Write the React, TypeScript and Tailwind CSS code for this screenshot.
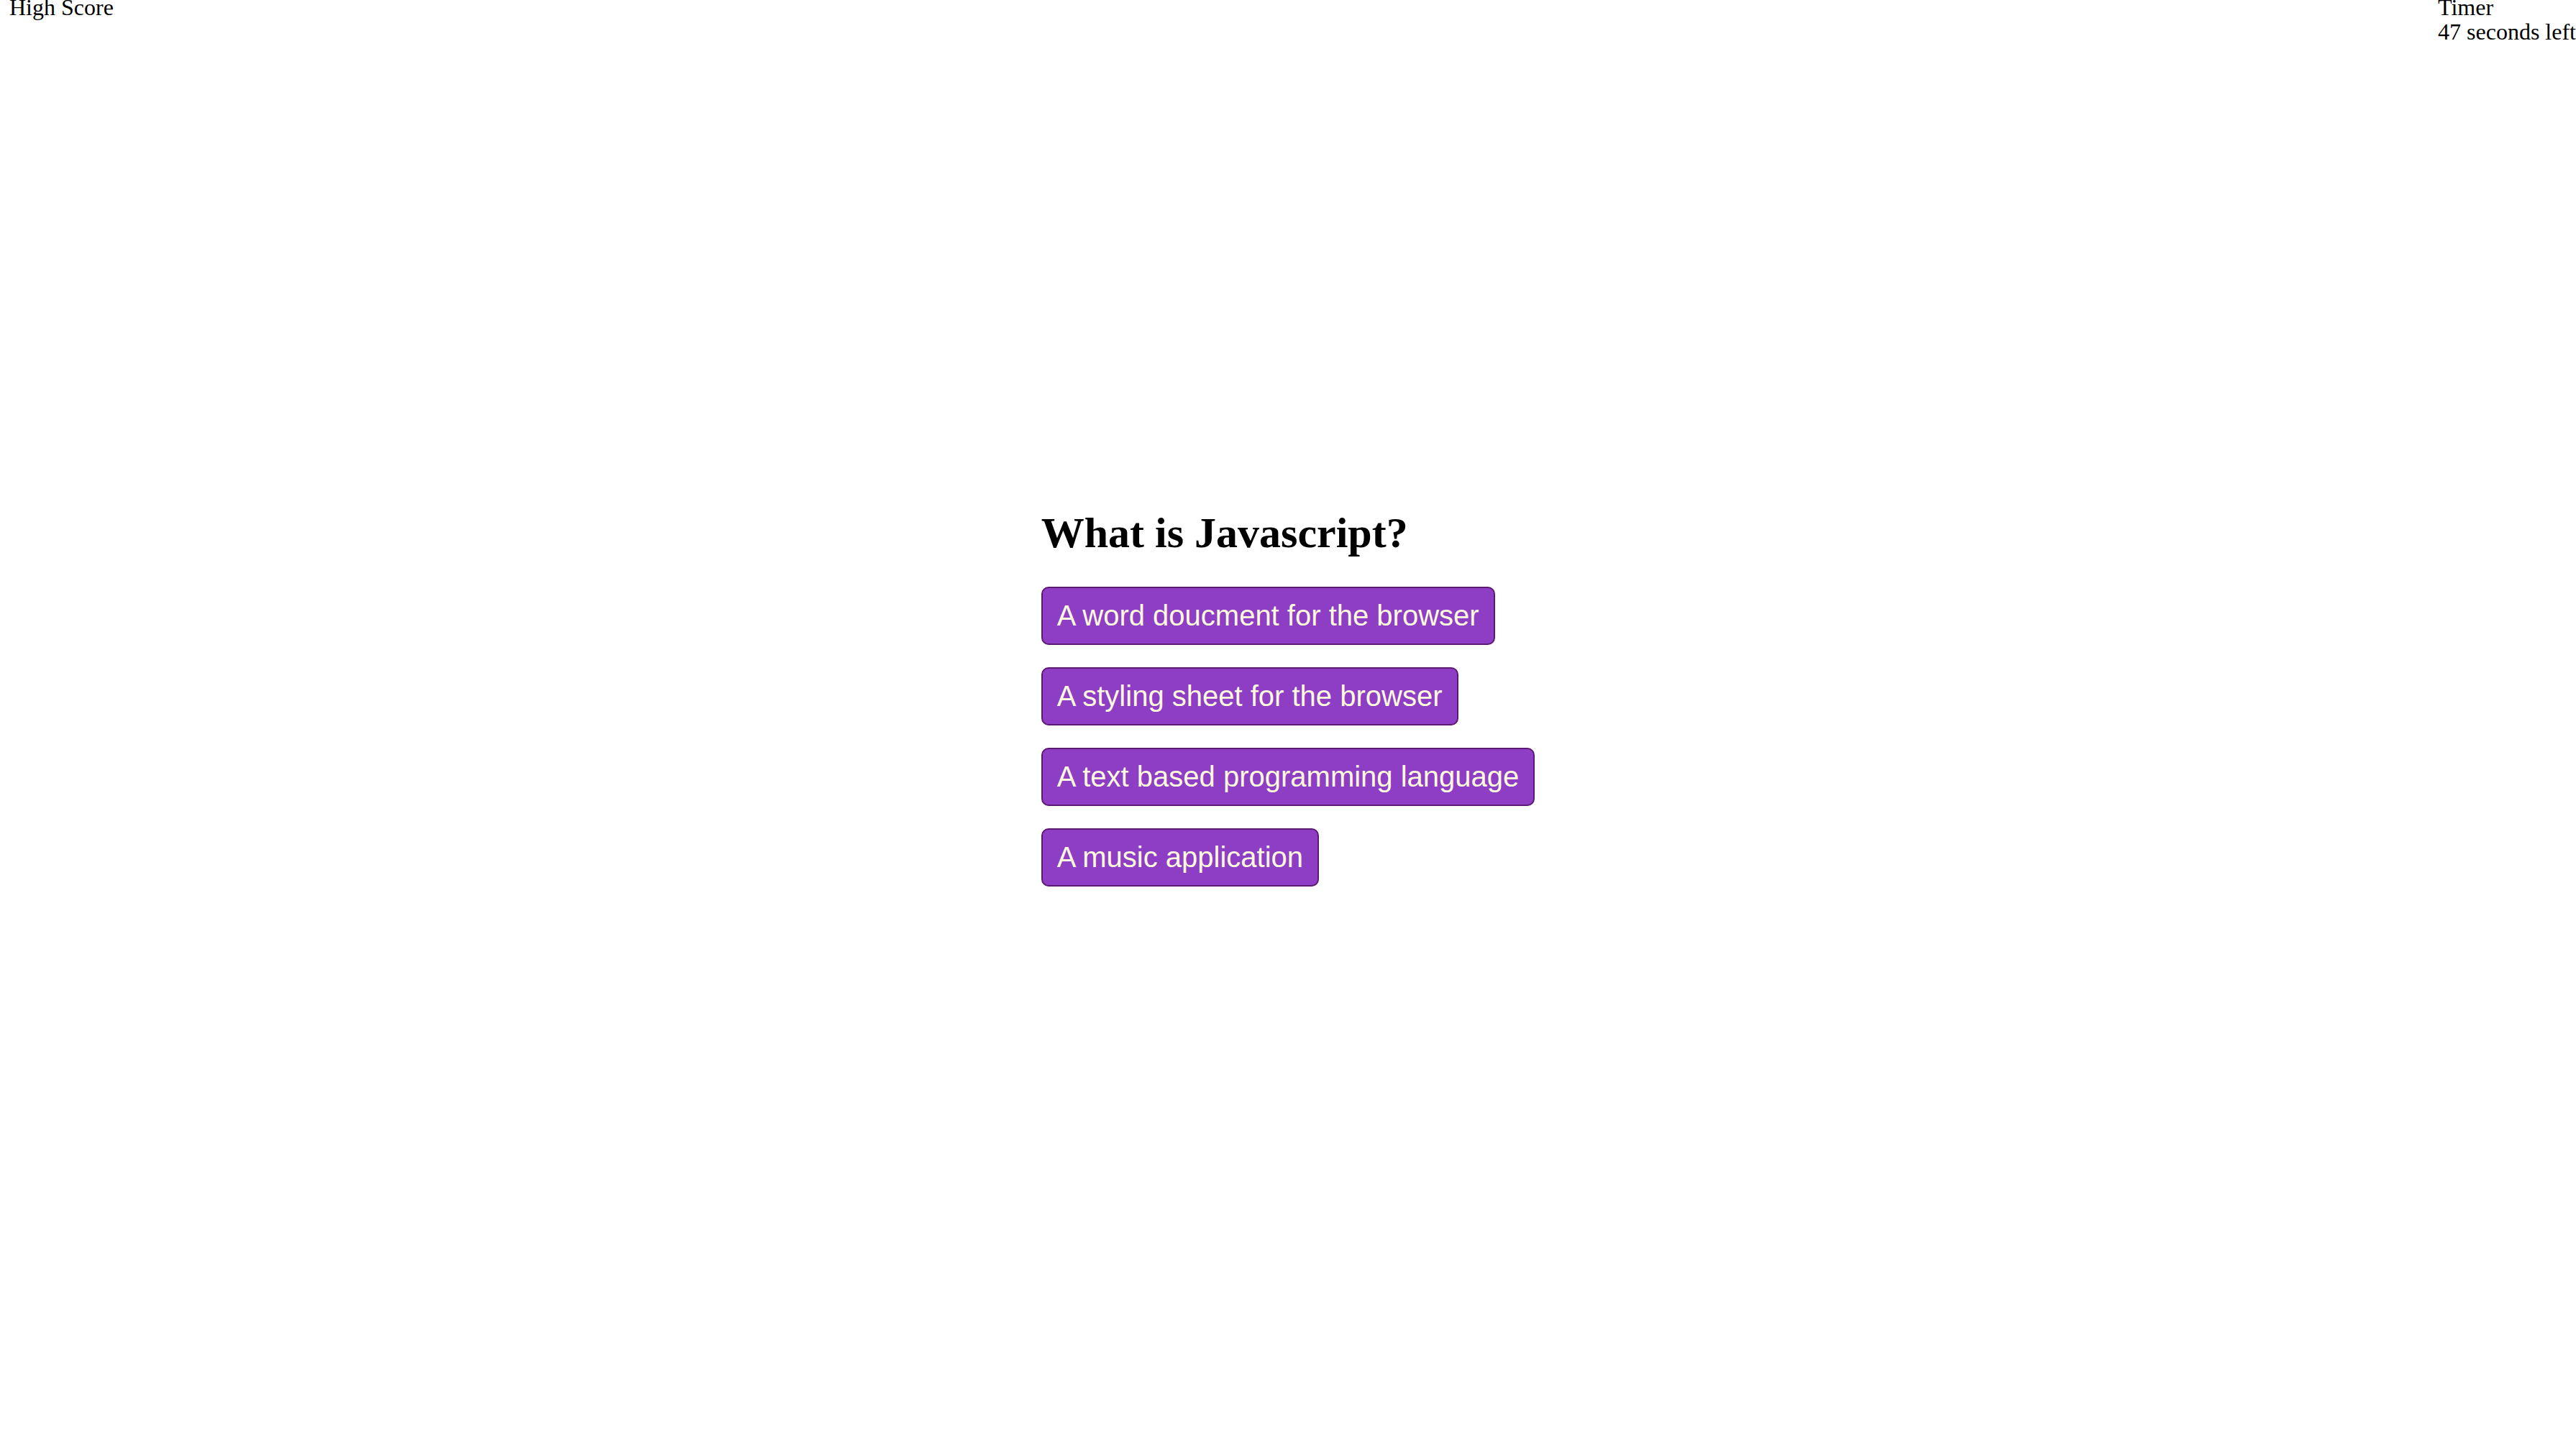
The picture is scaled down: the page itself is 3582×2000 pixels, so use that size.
import React from "react";

const answers = [
  "A word doucment for the browser",
  "A styling sheet for the browser",
  "A text based programming language",
  "A music application",
];

export default function App() {
  return (
    <div className="min-h-screen w-full bg-white text-black font-['Liberation_Serif','Times_New_Roman',serif] text-[32px] leading-[34px]">
      <header className="flex justify-between items-start -mt-[7px]">
        <div className="pl-[13px]">High Score</div>
        <div>
          <div>Timer</div>
          <div>47 seconds left</div>
        </div>
      </header>
      <main className="flex justify-center pt-[646px]">
        <div className="flex flex-col items-start">
          <h1 className="text-[60px] leading-[68px] font-bold m-0">What is Javascript?</h1>
          <div className="flex flex-col items-start gap-[31px] mt-[41px]">
            {answers.map((a) => (
              <button
                key={a}
                className="bg-[#8d3ec4] text-[#fff8dc] border-2 border-[#5c1a70] rounded-[10px] px-[20px] py-[15px] text-[40px] leading-[47px] font-['Liberation_Sans',Arial,sans-serif] whitespace-nowrap"
              >
                {a}
              </button>
            ))}
          </div>
        </div>
      </main>
    </div>
  );
}
